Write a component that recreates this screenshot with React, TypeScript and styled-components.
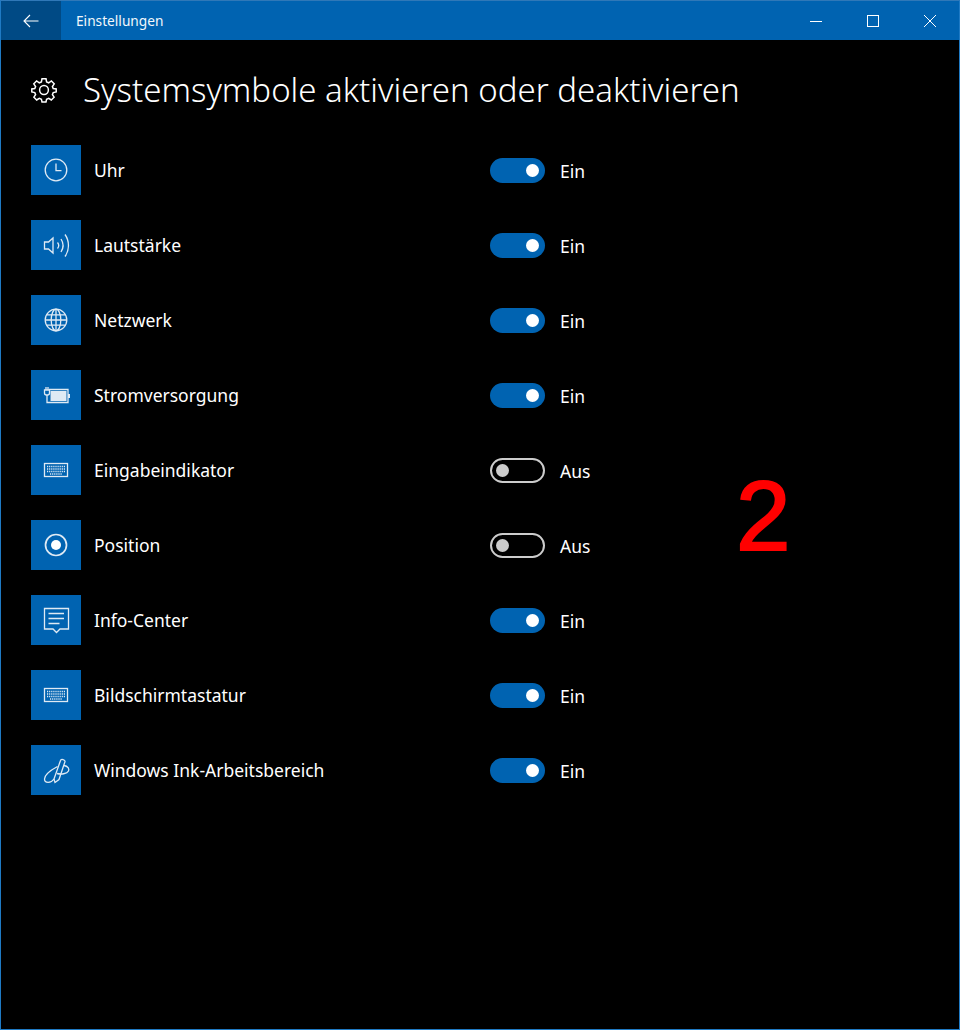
import * as React from "react";
import styled, { createGlobalStyle } from "styled-components";

const GlobalStyle = createGlobalStyle`
  html, body {
    margin: 0;
    padding: 0;
    background: #000;
  }
`;

const colors = {
  accent: "#0063b1",
  accentDark: "#004a85",
  border: "#1f7ac4",
};

const Window = styled.div`
  position: relative;
  box-sizing: border-box;
  width: 960px;
  height: 1030px;
  background: #000;
  border: 1px solid ${colors.border};
  border-top-color: #2f78b8;
  font-family: "Noto Sans", "Open Sans", sans-serif;
  color: #fff;
  overflow: hidden;
`;

const TitleBar = styled.div`
  display: flex;
  align-items: center;
  height: 39px;
  padding-right: 1px;
  background: ${colors.accent};
`;

const BackButton = styled.div`
  display: flex;
  align-items: center;
  justify-content: center;
  width: 60px;
  height: 100%;
  background: ${colors.accentDark};
`;

const TitleText = styled.div`
  flex: 1;
  margin-left: 15px;
  font-size: 13.7px;
  color: #f2f7fb;
`;

const WindowButton = styled.div`
  display: flex;
  align-items: center;
  justify-content: center;
  width: 57px;
  height: 100%;
`;

const Content = styled.div`
  padding: 0 0 0 30px;
`;

const Header = styled.div`
  display: flex;
  align-items: center;
  height: 46px;
  margin-top: 26px;
  margin-bottom: 33px;
`;

const HeaderIcon = styled.div`
  display: flex;
  width: 52px;
  padding-top: 2px;
`;

const Heading = styled.h1`
  margin: 0;
  font-size: 33px;
  font-weight: 300;
  letter-spacing: 0;
  white-space: nowrap;
`;

const List = styled.div`
  display: flex;
  flex-direction: column;
  gap: 25px;
`;

const Row = styled.div`
  display: flex;
  align-items: center;
  height: 50px;
`;

const IconTile = styled.div`
  display: flex;
  align-items: center;
  justify-content: center;
  width: 50px;
  height: 50px;
  background: ${colors.accent};
`;

const Label = styled.div`
  width: 396px;
  margin-left: 13px;
  font-size: 17.5px;
`;

const Track = styled.div<{ $on: boolean }>`
  display: flex;
  align-items: center;
  justify-content: ${(p) => (p.$on ? "flex-end" : "flex-start")};
  box-sizing: border-box;
  width: 55px;
  height: 25px;
  padding: 0 5px;
  margin-top: 1px;
  border-radius: 13px;
  background: ${(p) => (p.$on ? colors.accent : "transparent")};
  border: ${(p) => (p.$on ? "none" : "2px solid #cccccc")};
`;

const Knob = styled.div<{ $on: boolean }>`
  width: 13px;
  height: 13px;
  margin: ${(p) => (p.$on ? "0 1px 0 0" : "0 0 0 -1px")};
  border-radius: 50%;
  background: ${(p) => (p.$on ? "#fff" : "#cccccc")};
`;

const State = styled.div`
  margin-left: 15px;
  margin-top: 1px;
  font-size: 17.5px;
`;

const Annotation = styled.div`
  position: absolute;
  left: 735px;
  top: 459px;
  font-family: "Liberation Sans", Arial, sans-serif;
  font-size: 98px;
  line-height: 112px;
  color: #ff0000;
  -webkit-text-stroke: 2px #ff0000;
`;

const Glyph = styled.svg.attrs({ fill: "none", stroke: "#fff" })`
  display: block;
`;

const TileGlyph = styled(Glyph).attrs({ width: 30, height: 30, viewBox: "0 0 30 30" })`
  stroke: #dfeaf4;
  stroke-width: 1.3;
`;

const ClockIcon = () => (
  <TileGlyph>
    <circle cx="15" cy="15" r="10.8" />
    <path d="M15 8.5V15.6H20.5" />
  </TileGlyph>
);

const VolumeIcon = () => (
  <TileGlyph>
    <path d="M3.5 12H7.5L12 8V23L7.5 19H3.5Z" />
    <path d="M16.5 12.5C17.9 14.2 17.9 16.8 16.5 18.5" />
    <path d="M20 9C22.6 13 22.6 18 20 22" />
    <path d="M24 4.5C28.6 11 28.6 20 24 26.5" />
  </TileGlyph>
);

const GlobeIcon = () => (
  <TileGlyph>
    <circle cx="15" cy="15" r="10.8" />
    <ellipse cx="15" cy="15" rx="4.8" ry="10.8" />
    <path d="M15 4.2V25.8M4.2 15H25.8M5.8 9.8H24.2M5.8 20.2H24.2" />
  </TileGlyph>
);

const PowerIcon = () => (
  <TileGlyph>
    <path d="M3.5 10V13C3.5 14.2 4.4 15 5.5 15H6.5C7.6 15 8.5 14.2 8.5 13V10Z" />
    <path d="M5 10V7M7 10V7M6 15V22.5H8" />
    <path d="M8 9.5H27V22.5H8" />
    <rect x="9.5" y="11" width="16" height="10" fill="#dfeaf4" stroke="none" />
    <rect x="27" y="14" width="2" height="4" fill="#dfeaf4" stroke="none" />
  </TileGlyph>
);

const KeyboardIcon = () => (
  <TileGlyph>
    <rect x="3.5" y="8.5" width="23" height="13" />
    <path
      d="M6 11.5H24M6 14H24M6 16.5H24M9 19H21"
      strokeWidth="1.4"
      strokeDasharray="1.2 0.9"
    />
  </TileGlyph>
);

const PositionIcon = () => (
  <TileGlyph>
    <circle cx="15" cy="15" r="10.5" strokeWidth="1.7" />
    <circle cx="15" cy="15" r="5" fill="#fff" stroke="none" />
  </TileGlyph>
);

const ActionCenterIcon = () => (
  <TileGlyph>
    <path d="M3.5 3.5H27.5V24H19L15.5 27.5L12 24H3.5Z" />
    <path d="M7.5 8.5H23M7.5 13.5H23M7.5 18.5H18.5" />
  </TileGlyph>
);

const InkIcon = () => (
  <TileGlyph>
    <path d="M13 24L19.5 5.5C20 3.6 24.3 4.6 24 6.6L18 24.5L14 27.5Z" />
    <path d="M16.5 11.5C10 15 3.5 19 3.5 24C3.5 28.5 10 28.5 13 24" />
    <path d="M23 10.5C27 11 28.5 14 27.5 16C26 19 20 19.5 16 18.5" />
  </TileGlyph>
);

const GearIcon = () => (
  <Glyph width="26" height="26" viewBox="0 0 26 26" strokeWidth="1.5">
    <circle cx="13" cy="13" r="4.4" />
    <path d="M11 1.8H15L15.6 4.9L17.7 5.8L20.4 4L23.2 6.8L21.4 9.5L22.2 11.5L25.2 12V15L22.2 15.6L21.4 17.6L23.1 20.2L20.3 23L17.7 21.3L15.6 22.2L15 25H11L10.4 22.2L8.3 21.3L5.7 23L2.9 20.2L4.6 17.6L3.8 15.6L0.8 15V12L3.8 11.5L4.6 9.5L2.8 6.8L5.6 4L8.3 5.8L10.4 4.9Z" />
  </Glyph>
);

const rows = [
  { label: "Uhr", on: true, icon: <ClockIcon /> },
  { label: "Lautstärke", on: true, icon: <VolumeIcon /> },
  { label: "Netzwerk", on: true, icon: <GlobeIcon /> },
  { label: "Stromversorgung", on: true, icon: <PowerIcon /> },
  { label: "Eingabeindikator", on: false, icon: <KeyboardIcon /> },
  { label: "Position", on: false, icon: <PositionIcon /> },
  { label: "Info-Center", on: true, icon: <ActionCenterIcon /> },
  { label: "Bildschirmtastatur", on: true, icon: <KeyboardIcon /> },
  { label: "Windows Ink-Arbeitsbereich", on: true, icon: <InkIcon /> },
];

export default function App(): JSX.Element {
  return (
    <>
      <GlobalStyle />
      <Window>
        <TitleBar>
          <BackButton>
            <Glyph width="16" height="14" viewBox="0 0 16 14" strokeWidth="1.1">
              <path d="M15.5 7H1M7 1L1 7L7 13" />
            </Glyph>
          </BackButton>
          <TitleText>Einstellungen</TitleText>
          <WindowButton>
            <Glyph width="12" height="12" viewBox="0 0 12 12">
              <path d="M0 6.5H12" />
            </Glyph>
          </WindowButton>
          <WindowButton>
            <Glyph width="12" height="12" viewBox="0 0 12 12">
              <rect x="0.5" y="0.5" width="11" height="11" />
            </Glyph>
          </WindowButton>
          <WindowButton>
            <Glyph width="12" height="12" viewBox="0 0 12 12">
              <path d="M0 0L12 12M12 0L0 12" />
            </Glyph>
          </WindowButton>
        </TitleBar>
        <Content>
          <Header>
            <HeaderIcon>
              <GearIcon />
            </HeaderIcon>
            <Heading>Systemsymbole aktivieren oder deaktivieren</Heading>
          </Header>
          <List>
            {rows.map((row) => (
              <Row key={row.label}>
                <IconTile>{row.icon}</IconTile>
                <Label>{row.label}</Label>
                <Track $on={row.on}>
                  <Knob $on={row.on} />
                </Track>
                <State>{row.on ? "Ein" : "Aus"}</State>
              </Row>
            ))}
          </List>
        </Content>
        <Annotation>2</Annotation>
      </Window>
    </>
  );
}
